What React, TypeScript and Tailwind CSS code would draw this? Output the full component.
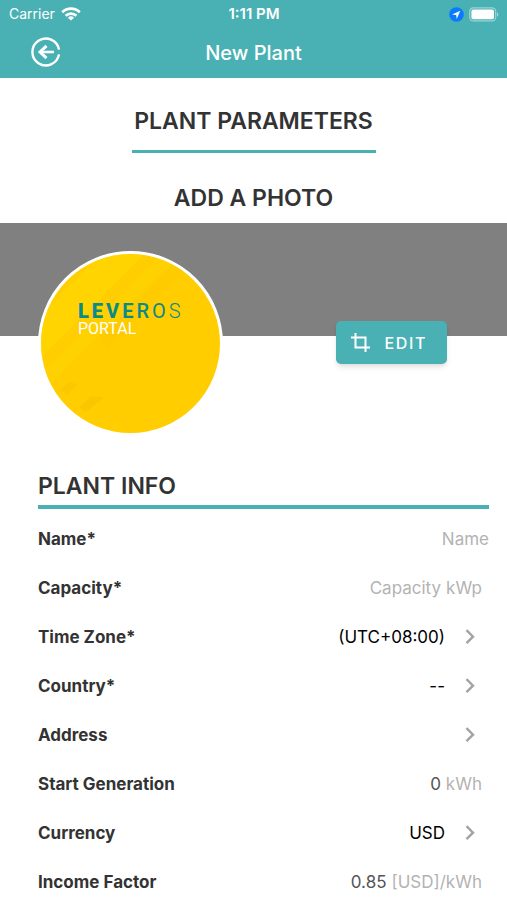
import { useState } from "react";
import type { ReactNode } from "react";

function Chevron() {
  return (
    <svg width="10" height="16" viewBox="0 0 10 16" fill="none" className="pointer-events-none shrink-0" aria-hidden="true">
      <path d="M1.5 1.2 8 7.7l-6.5 6.5" stroke="#a3a3a3" strokeWidth="2.4" />
    </svg>
  );
}

function StatusBar() {
  return (
    <div className="grid h-7 grid-cols-3 items-center pr-2 pl-[9px]">
      <div className="flex items-center gap-[6px] text-sm">
        <span>Carrier</span>
        <svg width="20" height="14" viewBox="0 0 20 14" fill="none" stroke="#fff" strokeWidth="2.6" aria-hidden="true">
          <path d="M1.2 5.2a12.6 12.6 0 0 1 17.6 0" />
          <path d="M4.6 8.8a7.8 7.8 0 0 1 10.8 0" />
          <path d="M10 13.6 6.9 10.7a4.5 4.5 0 0 1 6.2 0z" fill="#fff" stroke="none" />
        </svg>
      </div>
      <span className="text-center text-[15px] leading-5 font-semibold">1:11 PM</span>
      <div className="flex items-center justify-end gap-[5px]">
        <svg width="15" height="15" viewBox="0 0 15 15" aria-hidden="true">
          <circle cx="7.5" cy="7.5" r="7.3" fill="#0a7bff" />
          <path d="M11.3 3.8 3 7.4l4.2.5.5 4.1z" fill="#fff" />
        </svg>
        <svg width="30" height="15" viewBox="0 0 30 15" aria-hidden="true">
          <rect x="0.7" y="0.9" width="26" height="13" rx="3.6" fill="none" stroke="#fff" strokeOpacity="0.45" strokeWidth="1.2" />
          <rect x="2.4" y="2.6" width="22.6" height="9.6" rx="2" fill="#fff" />
          <path d="M28 5.2c1.8.8 1.8 3.6 0 4.4z" fill="#fff" fillOpacity="0.5" />
        </svg>
      </div>
    </div>
  );
}

function Avatar() {
  return (
    <div className="relative size-[185px] overflow-hidden rounded-full border-[3px] border-white bg-[#ffcd00]">
      <svg viewBox="0 0 180 180" className="absolute inset-0 size-full" aria-hidden="true">
        <path d="M0 60 60 0h44L0 104z" fill="#ffd800" fillOpacity="0.6" />
        <path d="M0 120 120 0h20L0 140z" fill="#ffd400" fillOpacity="0.6" />
        <path d="M60 84 134 10l16 2-84 84z" fill="#fdc800" fillOpacity="0.3" />
        <path d="m20 136 8-7 9 2-11 11z" fill="#f8c300" fillOpacity="0.5" />
        <path d="m38 154 12-11 14 1-19 15z" fill="#f6c100" fillOpacity="0.6" />
      </svg>
      <div className="relative pt-[47px] pl-[37px] font-['Roboto',sans-serif]">
        <p className="flex gap-[3px] text-xl leading-5 text-[#0b8b86]">
          <span className="font-black">L</span>
          <span className="font-black">E</span>
          <span className="font-extrabold">V</span>
          <span className="font-bold">E</span>
          <span className="font-medium">R</span>
          <span className="font-normal">O</span>
          <span className="font-light">S</span>
        </p>
        <p className="text-base leading-4 text-white">PORTAL</p>
      </div>
    </div>
  );
}

function Row({ label, htmlFor, children }: { label: string; htmlFor: string; children: ReactNode }) {
  return (
    <div className="flex h-8 items-center justify-between">
      <label htmlFor={htmlFor} className="shrink-0 font-bold text-[#333]">
        {label}
      </label>
      {children}
    </div>
  );
}

function PickerRow({ label, id, options }: { label: string; id: string; options: string[] }) {
  const [value, setValue] = useState(options[0]);
  return (
    <Row label={label} htmlFor={id}>
      <div className="flex items-center gap-5 pr-[14px]">
        <select
          id={id}
          value={value}
          onChange={(e) => setValue(e.target.value)}
          className="w-40 appearance-none bg-transparent text-black outline-none [text-align-last:right]"
        >
          {options.map((o) => (
            <option key={o}>{o}</option>
          ))}
        </select>
        <Chevron />
      </div>
    </Row>
  );
}

function AmountRow({ label, id, unit, initial = "", placeholder }: { label: string; id: string; unit: string; initial?: string; placeholder?: string }) {
  const [value, setValue] = useState(initial);
  return (
    <Row label={label} htmlFor={id}>
      <div className="flex items-center gap-[5px] pr-[7px]">
        <input
          id={id}
          type="text"
          inputMode="decimal"
          value={value}
          placeholder={placeholder}
          onChange={(e) => setValue(e.target.value)}
          className="w-28 bg-transparent text-right text-[#555] outline-none placeholder:text-[#b3b3b3]"
        />
        <span className="text-[#b3b3b3]">{unit}</span>
      </div>
    </Row>
  );
}

export default function App() {
  return (
    <div className="bg-white font-['Inter',sans-serif] text-[#333]">
      <header className="bg-[#49b1b4] text-white">
        <StatusBar />
        <div className="grid h-[50px] grid-cols-[1fr_auto_1fr] items-center px-[30px]">
          <button type="button" aria-label="Back" className="size-8">
            <svg viewBox="0 0 32 32" fill="none" stroke="#fff" strokeWidth="2.4" className="size-8" aria-hidden="true">
              <path d="M29 12.6A13.4 13.4 0 1 0 29 17.4" />
              <path d="M24 15H10" strokeWidth="2.6" />
              <path d="M16.5 8.8 10 15l6.5 6.2" strokeWidth="3" />
            </svg>
          </button>
          <h1 className="text-xl font-medium">New Plant</h1>
        </div>
      </header>

      <main>
        <div className="flex flex-col items-center pt-[27px]">
          <h2 className="w-[244px] border-b-[3px] border-[#49b1b4] pb-[13px] text-center text-[23px] leading-8 font-semibold whitespace-nowrap">
            PLANT PARAMETERS
          </h2>
          <h3 className="pt-[29px] pb-[9px] text-[23px] leading-8 font-semibold">ADD A PHOTO</h3>
        </div>

        <section className="relative">
          <div className="absolute inset-x-0 top-0 h-[113px] bg-[#808080]" />
          <div className="relative flex items-start justify-between pt-7 pr-[60px] pl-[38px]">
            <Avatar />
            <button
              type="button"
              className="mt-[70px] flex h-[43px] items-center gap-[15px] rounded-[5px] bg-[#49b1b4] pr-5 pl-[15px] text-base font-medium tracking-widest text-white shadow-md"
            >
              <svg width="19" height="19" viewBox="0 0 19 19" fill="none" stroke="#fff" strokeWidth="2" aria-hidden="true">
                <path d="M4.5 0v14.5H19" />
                <path d="M0 4.5h14.5V19" />
              </svg>
              EDIT
            </button>
          </div>
        </section>

        <form className="pt-[34px] pr-[18px] pl-[38px] text-[17px] leading-6" onSubmit={(e) => e.preventDefault()}>
          <h2 className="border-b-4 border-[#49b1b4] pb-[3px] text-[23px] leading-8 font-semibold">PLANT INFO</h2>
          <div className="flex flex-col gap-[17px] pt-[14px]">
            <Row label="Name*" htmlFor="name">
              <input
                id="name"
                type="text"
                placeholder="Name"
                className="w-60 bg-transparent text-right text-[#555] outline-none placeholder:text-[#b3b3b3]"
              />
            </Row>
            <AmountRow label="Capacity*" id="capacity" unit="kWp" placeholder="Capacity" />
            <PickerRow label="Time Zone*" id="timezone" options={["(UTC+08:00)", "(UTC+00:00)"]} />
            <PickerRow label="Country*" id="country" options={["--"]} />
            <Row label="Address" htmlFor="address">
              <button id="address" type="button" className="flex h-8 w-40 items-center justify-end pr-[14px]">
                <Chevron />
              </button>
            </Row>
            <AmountRow label="Start Generation" id="generation" unit="kWh" initial="0" />
            <PickerRow label="Currency" id="currency" options={["USD", "EUR"]} />
            <AmountRow label="Income Factor" id="income" unit="[USD]/kWh" initial="0.85" />
          </div>
        </form>
      </main>
    </div>
  );
}
